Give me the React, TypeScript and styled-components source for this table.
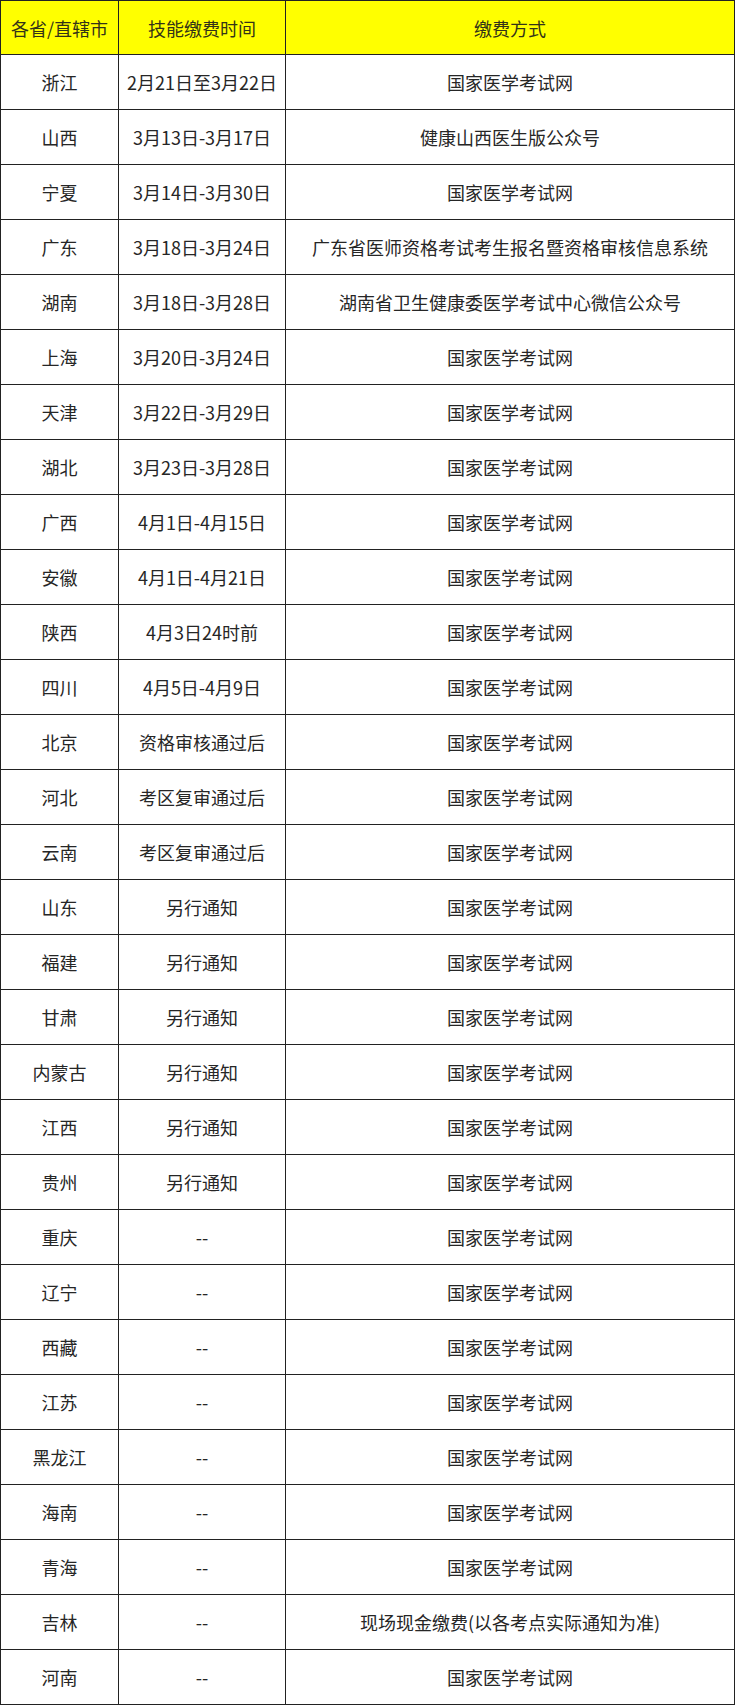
import { createGlobalStyle, styled } from "styled-components";

const GlobalStyle = createGlobalStyle`
  html, body {
    margin: 0;
    padding: 0;
    background: #ffffff;
  }
  body {
    font-family: "Noto Sans CJK SC", "Noto Sans", sans-serif;
  }
`;

const StyledPage = styled.div`
  width: 736px;
  padding: 0 1px 0 0;
  box-sizing: border-box;
`;

const StyledTable = styled.table`
  width: 735px;
  border-collapse: collapse;
  table-layout: fixed;
  color: #262626;
  font-size: 18px;
`;

const StyledHeadCell = styled.th<{ $width?: number }>`
  width: ${(p) => (p.$width ? `${p.$width}px` : "auto")};
  height: 53px;
  padding: 0;
  background: #ffff00;
  border: 1.5px solid #222;
  font-weight: 400;
  color: #333318;
  text-align: center;
  vertical-align: middle;
`;

const StyledCell = styled.td`
  height: 54px;
  padding: 0;
  border: 1.5px solid #222;
  text-align: center;
  vertical-align: middle;
  white-space: nowrap;
`;

const rows: [string, string, string][] = [
  ["浙江", "2月21日至3月22日", "国家医学考试网"],
  ["山西", "3月13日-3月17日", "健康山西医生版公众号"],
  ["宁夏", "3月14日-3月30日", "国家医学考试网"],
  ["广东", "3月18日-3月24日", "广东省医师资格考试考生报名暨资格审核信息系统"],
  ["湖南", "3月18日-3月28日", "湖南省卫生健康委医学考试中心微信公众号"],
  ["上海", "3月20日-3月24日", "国家医学考试网"],
  ["天津", "3月22日-3月29日", "国家医学考试网"],
  ["湖北", "3月23日-3月28日", "国家医学考试网"],
  ["广西", "4月1日-4月15日", "国家医学考试网"],
  ["安徽", "4月1日-4月21日", "国家医学考试网"],
  ["陕西", "4月3日24时前", "国家医学考试网"],
  ["四川", "4月5日-4月9日", "国家医学考试网"],
  ["北京", "资格审核通过后", "国家医学考试网"],
  ["河北", "考区复审通过后", "国家医学考试网"],
  ["云南", "考区复审通过后", "国家医学考试网"],
  ["山东", "另行通知", "国家医学考试网"],
  ["福建", "另行通知", "国家医学考试网"],
  ["甘肃", "另行通知", "国家医学考试网"],
  ["内蒙古", "另行通知", "国家医学考试网"],
  ["江西", "另行通知", "国家医学考试网"],
  ["贵州", "另行通知", "国家医学考试网"],
  ["重庆", "--", "国家医学考试网"],
  ["辽宁", "--", "国家医学考试网"],
  ["西藏", "--", "国家医学考试网"],
  ["江苏", "--", "国家医学考试网"],
  ["黑龙江", "--", "国家医学考试网"],
  ["海南", "--", "国家医学考试网"],
  ["青海", "--", "国家医学考试网"],
  ["吉林", "--", "现场现金缴费(以各考点实际通知为准)"],
  ["河南", "--", "国家医学考试网"],
];

export default function App() {
  return (
    <StyledPage>
      <GlobalStyle />
      <StyledTable>
        <thead>
          <tr>
            <StyledHeadCell $width={117}>各省/直辖市</StyledHeadCell>
            <StyledHeadCell $width={166}>技能缴费时间</StyledHeadCell>
            <StyledHeadCell>缴费方式</StyledHeadCell>
          </tr>
        </thead>
        <tbody>
          {rows.map(([prov, time, way]) => (
            <tr key={prov}>
              <StyledCell>{prov}</StyledCell>
              <StyledCell>{time}</StyledCell>
              <StyledCell>{way}</StyledCell>
            </tr>
          ))}
        </tbody>
      </StyledTable>
    </StyledPage>
  );
}
